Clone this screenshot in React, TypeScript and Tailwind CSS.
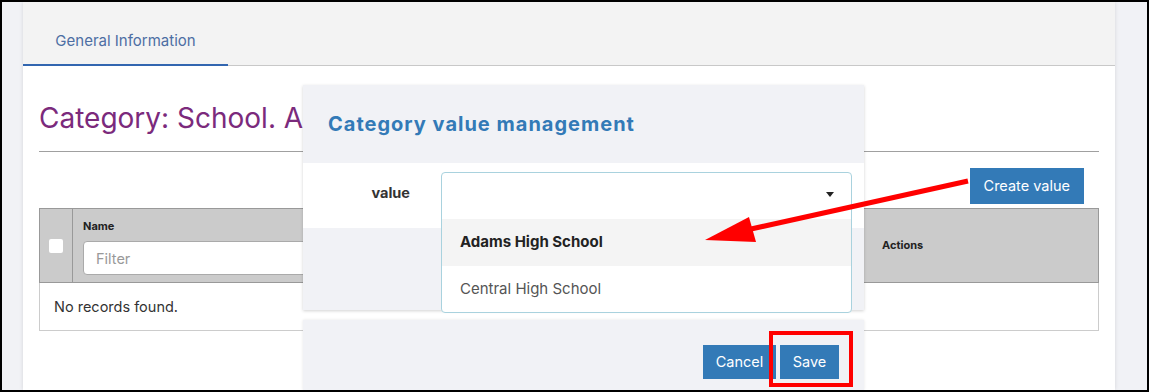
/** Red annotation layer drawn over the screenshot (arrow + highlight box). */
function Annotations() {
  return (
    <svg
      className="pointer-events-none absolute -left-[2px] -top-[2px]"
      width={1149}
      height={392}
      viewBox="0 0 1149 392"
    >
      <line x1={968} y1={181} x2={742} y2={231} stroke="#ff0000" strokeWidth={5} />
      <polygon points="705,240 749,217 756,242" fill="#ff0000" />
      <rect x={771} y={333} width={80} height={52} fill="none" stroke="#ff0000" strokeWidth={4} />
    </svg>
  );
}

function ValueDropdown() {
  return (
    <div className="absolute left-[138px] top-[87px] w-[411px] overflow-hidden rounded-[4px] border border-[#a9d2de] bg-white">
      <div className="flex h-[46px] items-center justify-end pb-[4px] pr-[17px]">
        <span className="h-0 w-0 border-x-[4px] border-t-[5px] border-x-transparent border-t-[#222]" />
      </div>
      <div className="flex h-[47px] items-center bg-[#f4f4f4] px-[18px] text-[15px] font-bold text-[#222]">
        Adams High School
      </div>
      <div className="flex h-[46px] items-center px-[18px] text-[15px] text-[#555]">
        Central High School
      </div>
    </div>
  );
}

function ValueModal() {
  return (
    <div className="absolute bottom-0 left-[301px] top-[83px] flex w-[561px] flex-col">
      <div className="flex flex-col shadow-[0_1px_3px_rgba(0,0,0,0.18)]">
        <div className="flex h-[78px] items-center bg-[#f1f2f6] px-[25px]">
          <h2 className="text-[20px] font-bold tracking-[1px] text-[#337ab7]">Category value management</h2>
        </div>
        <div className="flex h-[65px] items-center bg-white pb-[6px]">
          <label className="w-[107px] text-right text-[14.5px] font-bold text-[#333]">value</label>
        </div>
        <div className="h-[82px] bg-[#f1f2f6]" />
      </div>
      <div className="h-[10px]" />
      <div className="flex flex-1 items-start justify-end gap-[4px] bg-[#f1f2f6] pr-[25px] pt-[25px] shadow-[0_0_3px_rgba(0,0,0,0.1)]">
        <button className="h-[34px] w-[73px] bg-[#337ab7] text-[14.5px] text-white">Cancel</button>
        <button className="h-[34px] w-[59px] bg-[#337ab7] text-[14.5px] text-white">Save</button>
      </div>
      <ValueDropdown />
    </div>
  );
}

function ValuesTable() {
  return (
    <div className="mt-[4px]">
      <div className="flex h-[75px] border border-[#999] bg-[#cbcbcb]">
        <div className="flex w-[33px] items-center justify-center border-r border-[#999]">
          <span className="h-[14px] w-[14px] rounded-[2px] bg-white" />
        </div>
        <div className="flex flex-1 flex-col px-[10px] pt-[10px]">
          <span className="text-[11px] font-bold leading-[14px] text-[#222]">Name</span>
          <input
            className="mt-[8px] h-[34px] w-full rounded-[4px] border border-[#aaa] bg-white px-[12px] text-[14.5px] outline-none placeholder:text-[#999]"
            placeholder="Filter"
          />
        </div>
        <div className="flex w-[229px] items-center px-[13px] text-[11px] font-bold text-[#222]">
          Actions
        </div>
      </div>
      <div className="flex h-[48px] items-center border-x border-b border-[#ccc] px-[14px] text-[14.5px] text-[#333]">
        No records found.
      </div>
    </div>
  );
}

export default function App() {
  return (
    <div className="relative h-[392px] w-[1149px] overflow-hidden border-2 border-black bg-[#f1f2f6] font-['Inter',sans-serif]">
      <div className="ml-[21px] flex h-full w-[1092px] flex-col bg-white shadow-[0_0_4px_rgba(0,0,0,0.12)]">
        <div className="flex h-[64px] border-b border-[#c8c8c8] bg-[#f3f3f3]">
          <div className="-mb-px flex w-[205px] items-center justify-center border-b-2 border-[#3266b0] pt-[16px] text-[15px] text-[#4d6ea3]">
            General Information
          </div>
        </div>
        <div className="px-[16px]">
          <h1 className="mt-[35px] text-[28px] leading-[34px] text-[#7b2a7c]">Category: School. Adams</h1>
          <div className="mt-[16px] border-t border-[#a0a0a0]" />
          <div className="mt-[16px] flex justify-end pr-[15px]">
            <button className="h-[36px] bg-[#337ab7] px-[14px] text-[14.5px] text-white">Create value</button>
          </div>
          <ValuesTable />
        </div>
      </div>
      <ValueModal />
      <Annotations />
    </div>
  );
}
